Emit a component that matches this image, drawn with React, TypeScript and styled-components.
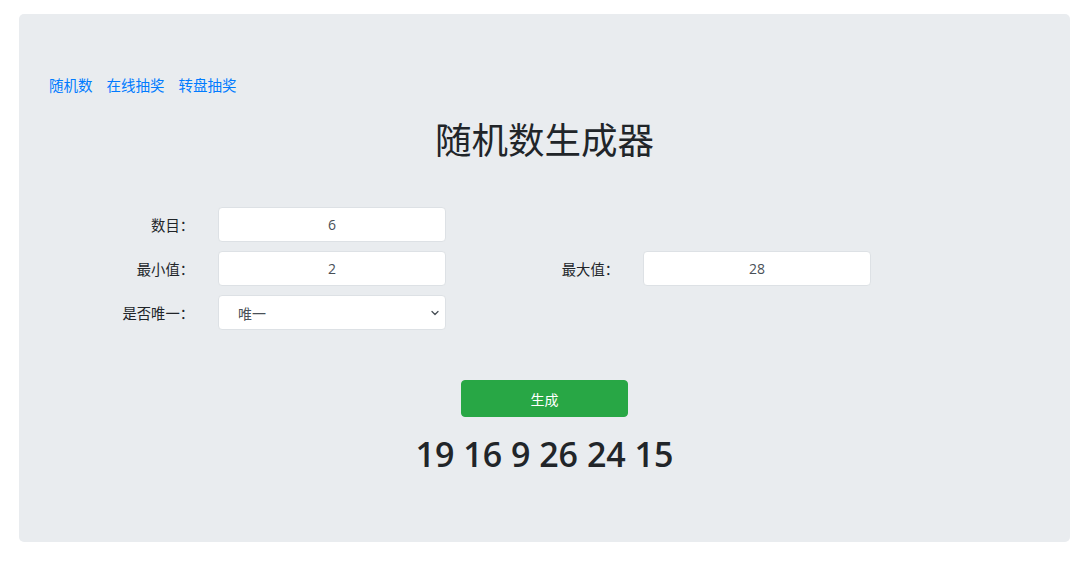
import React, { useState } from "react";
import styled, { createGlobalStyle } from "styled-components";

const GlobalStyle = createGlobalStyle`
  html, body { margin: 0; padding: 0; background: #ffffff; }
  body {
    font-family: "Open Sans", "Noto Sans CJK SC", sans-serif;
    color: #212529;
    font-size: 14px;
  }
  * { box-sizing: border-box; }
`;

const Page = styled.div`
  padding: 14px 10px 19px 19px;
`;

const Jumbotron = styled.div`
  background: #e9ecef;
  border-radius: 5px;
  height: 528px;
  padding: 60px 30px 0 30px;
  display: flex;
  flex-direction: column;
`;

const Nav = styled.nav`
  display: flex;
  gap: 14px;
  line-height: 21px;
`;

const NavLink = styled.a`
  color: #007bff;
  text-decoration: none;
  font-family: "Noto Sans CJK SC", sans-serif;
  font-size: 14.5px;
  cursor: pointer;
`;

const Title = styled.h1`
  margin: 22px 0 0 0;
  text-align: center;
  font-family: "Noto Sans CJK SC", sans-serif;
  font-weight: 400;
  font-size: 36.5px;
  line-height: 43px;
  color: #212529;
`;

const Form = styled.div`
  margin-top: 47px;
  display: grid;
  grid-template-columns: 145px 228px 149px 228px;
  grid-auto-rows: 35px;
  column-gap: 24px;
  row-gap: 9px;
  align-items: center;
`;

const Label = styled.label<{ $col: number; $row: number }>`
  grid-column: ${(p) => p.$col};
  grid-row: ${(p) => p.$row};
  text-align: right;
  font-family: "Noto Sans CJK SC", sans-serif;
  font-size: 14.3px;
  color: #212529;
`;

const Field = styled.div<{ $col: number; $row: number }>`
  grid-column: ${(p) => p.$col};
  grid-row: ${(p) => p.$row};
  position: relative;
  height: 35px;
`;

const Input = styled.input`
  width: 100%;
  height: 100%;
  border: 1px solid #dde1e5;
  border-radius: 4px;
  background: #ffffff;
  text-align: center;
  font-family: "Open Sans", "Noto Sans CJK SC", sans-serif;
  font-size: 14px;
  color: #495057;
  outline: none;
`;

const Select = styled.select`
  width: 100%;
  height: 100%;
  border: 1px solid #dde1e5;
  border-radius: 4px;
  background: #ffffff;
  appearance: none;
  -webkit-appearance: none;
  padding-left: 19px;
  font-family: "Noto Sans CJK SC", sans-serif;
  font-size: 14px;
  color: #495057;
  outline: none;
`;

const Chevron = styled.svg`
  position: absolute;
  right: 7px;
  top: 15px;
  width: 8px;
  height: 6px;
  pointer-events: none;
`;

const Button = styled.button`
  align-self: center;
  margin-top: 50px;
  width: 167px;
  height: 37px;
  border: 1px solid #28a745;
  border-radius: 4px;
  background: #28a745;
  color: #ffffff;
  font-family: "Noto Sans CJK SC", sans-serif;
  font-size: 14px;
  cursor: pointer;
`;

const Result = styled.div`
  margin-top: 17px;
  text-align: center;
  font-family: "Open Sans", sans-serif;
  font-weight: 600;
  font-size: 34px;
  line-height: 41px;
  color: #212529;
`;

export default function App() {
  const [count, setCount] = useState("6");
  const [min, setMin] = useState("2");
  const [max, setMax] = useState("28");
  const [unique, setUnique] = useState("1");

  return (
    <>
      <GlobalStyle />
      <Page>
        <Jumbotron>
          <Nav>
            <NavLink>随机数</NavLink>
            <NavLink>在线抽奖</NavLink>
            <NavLink>转盘抽奖</NavLink>
          </Nav>
          <Title>随机数生成器</Title>
          <Form>
            <Label $col={1} $row={1}>数目：</Label>
            <Field $col={2} $row={1}>
              <Input value={count} onChange={(e) => setCount(e.target.value)} />
            </Field>
            <Label $col={1} $row={2}>最小值：</Label>
            <Field $col={2} $row={2}>
              <Input value={min} onChange={(e) => setMin(e.target.value)} />
            </Field>
            <Label $col={3} $row={2}>最大值：</Label>
            <Field $col={4} $row={2}>
              <Input value={max} onChange={(e) => setMax(e.target.value)} />
            </Field>
            <Label $col={1} $row={3}>是否唯一：</Label>
            <Field $col={2} $row={3}>
              <Select value={unique} onChange={(e) => setUnique(e.target.value)}>
                <option value="1">唯一</option>
                <option value="0">不唯一</option>
              </Select>
              <Chevron viewBox="0 0 8 6">
                <path d="M1 1.5 L4 4.5 L7 1.5" fill="none" stroke="#495057" strokeWidth="1.3" strokeLinecap="round" strokeLinejoin="round" />
              </Chevron>
            </Field>
          </Form>
          <Button>生成</Button>
          <Result>19 16 9 26 24 15</Result>
        </Jumbotron>
      </Page>
    </>
  );
}
